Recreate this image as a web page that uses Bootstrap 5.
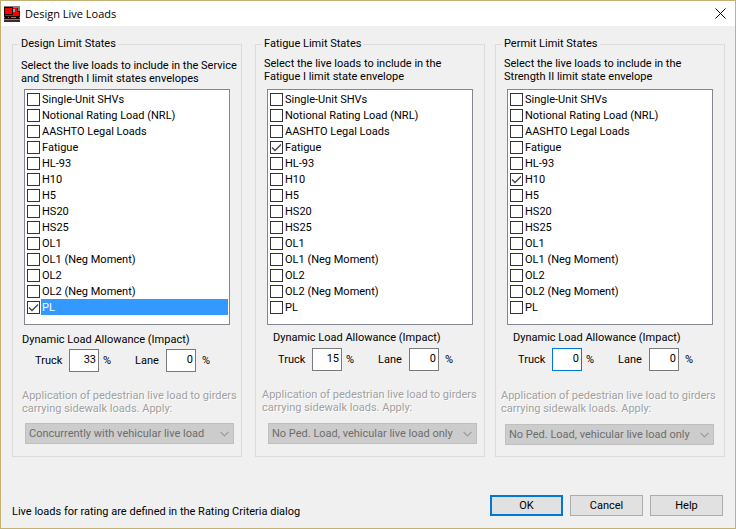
<!DOCTYPE html>
<html lang="en">
<head>
<meta charset="utf-8">
<meta name="viewport" content="width=device-width, initial-scale=1">
<title>Design Live Loads</title>
<link href="https://cdn.jsdelivr.net/npm/bootstrap@5.3.0/dist/css/bootstrap.min.css" rel="stylesheet">
<style>
body { font-family: Roboto, "Liberation Sans", sans-serif; font-size: 11px; line-height: 13px; color: #000; background: #f0f0f0; }
.dialog { border: 1px solid #c4b070; }
.titlebar { height: 25px; padding: 0 9px 0 3px; background: #fff; }
.titlebar h1 { font: 11px/16px "Open Sans", "Noto Sans", sans-serif; margin: 0 0 0 5px; }
.close-btn { width: 11px; height: 11px; line-height: 0; }
.content { padding: 11px 10px 0 11px; }
.group { flex: 1 1 0; border: 1px solid #dcdcdc; padding: 0 11px 11px; --apply-x: -2px; --combo-x: 1px; --impact-x: -2px; }
.group-fatigue { margin-left: 13px; --apply-x: -5px; --impact-x: 6px; }
.group-permit { margin-left: 10px; --apply-x: -6px; --combo-x: -2px; --impact-x: 6px; }
.group legend { float: none; width: auto; margin: 0 0 0 -5px; padding: 0 2px; font-size: 11px; line-height: 14px; }
.intro { margin: 8px -8px 4px -3px; white-space: nowrap; }
.group-fatigue .intro, .group-permit .intro { margin-top: 6px; margin-bottom: 6px; }
.checklist { border: 1px solid #828790; background: #fff; padding: 1px 1px 9px 2px; }
.checklist li { height: 16px; }
.checklist label { line-height: 16px; padding: 1px 0 0 1px; margin-left: 1px; }
.checklist .selected label { background: #39f; color: #fff; }
.tick { appearance: none; width: 13px; height: 13px; margin: 2px 0 0; border: 1px solid #333; border-radius: 0; background: #fff; flex: none; }
.tick:checked { background: #fff url("data:image/svg+xml,%3Csvg xmlns='http://www.w3.org/2000/svg' viewBox='0 0 11 11'%3E%3Cpath d='M1 5.5 4 8.5 10 2.5' fill='none' stroke='%23444' stroke-width='1.3'/%3E%3C/svg%3E") center / 11px 11px no-repeat; }
.impact { margin: 8px 0 0 var(--impact-x); }
.group-fatigue .impact, .group-permit .impact { margin-top: 6px; }
.factors { margin: 3px 0 0 11px; height: 23px; }
.group-fatigue .factors, .group-permit .factors { margin-top: 4px; }
.factors label { width: 34px; }
.factors .lane { margin-left: 21px; width: 31px; }
.factors input { width: 30px; height: 23px; border: 1px solid #7a7a7a; border-radius: 0; padding: 0 2px 3px 0; text-align: right; background: #fff; color: #000; }
.factors input.active { border-color: #0078d7; }
.unit { margin-left: 4px; width: 11px; }
.lane-unit { margin-left: 6px; }
.apply { display: block; margin: 17px -10px 8px var(--apply-x); white-space: nowrap; color: #a0a0a0; text-shadow: 1px 1px 0 #fff; }
.group-fatigue .apply, .group-permit .apply { margin-bottom: 9px; }
.group-permit .apply { margin-top: 18px; }
.combo { display: block; height: 21px; margin-left: var(--combo-x); width: calc(100% + 3px); border: 1px solid #bfbfbf; border-radius: 0; padding: 0 18px 0 3px; font-size: 11px; line-height: 19px; }
.combo:disabled { color: #6d6d6d; opacity: 1; background: #ccc url("data:image/svg+xml,%3Csvg xmlns='http://www.w3.org/2000/svg' viewBox='0 0 9 6'%3E%3Cpath d='M.5 .8 4.5 4.8 8.5 .8' fill='none' stroke='%239c9c9c' stroke-width='1.2'/%3E%3C/svg%3E") right 4px center / 9px 6px no-repeat; }
.footer { padding: 38px 12px 6px 11px; }
.footer p { margin-top: 10px; }
.commands { gap: 7px; }
.cmd { width: 73px; height: 21px; padding: 0; border: 1px solid #adadad; border-radius: 0; background: #e1e1e1; color: #000; font-size: 11px; line-height: 17px; }
.cmd-default { border: 2px solid #0078d7; }
</style>
</head>
<body>
<main class="dialog min-vh-100 d-flex flex-column">
  <header class="titlebar d-flex align-items-center">
    <svg width="16" height="16" viewBox="0 0 16 16" shape-rendering="crispEdges" aria-hidden="true">
      <path fill="#808080" d="M0 0h16v16H0z"/>
      <path fill="#200" d="M0 1h9v1h5v3h2v6H0z"/>
      <path fill="#f00" d="M1 2h7v6H1zM9 2h4v4h2v3H9zM1 9h14v1H1z"/>
      <path fill="#3cc" d="M9 3h2v3H9z"/>
      <path fill="#000" d="M1 10h3v2H1zM5 10h2v2H5zM12 10h3v2h-3z"/>
      <path fill="#300" d="M0 12h16v1H0z"/>
      <path fill="#333" d="M0 14h16v2H0z"/>
    </svg>
    <h1>Design Live Loads</h1>
    <button type="button" class="close-btn btn p-0 border-0 ms-auto" aria-label="Close">
      <svg width="11" height="11" viewBox="0 0 11 11"><path d="M.5 .5 10.500 10.500M10.500 .5 .5 10.500" stroke="#000" stroke-width="1"/></svg>
    </button>
  </header>

  <div class="content d-flex align-items-stretch">
    <fieldset class="group">
      <legend>Design Limit States</legend>
      <p class="intro">Select the live loads to include in the Service<br>and Strength I limit states envelopes</p>
      <ul class="checklist list-unstyled mb-0">
        <li class="d-flex"><input class="tick" type="checkbox" id="d1"><label class="flex-fill" for="d1">Single-Unit SHVs</label></li>
        <li class="d-flex"><input class="tick" type="checkbox" id="d2"><label class="flex-fill" for="d2">Notional Rating Load (NRL)</label></li>
        <li class="d-flex"><input class="tick" type="checkbox" id="d3"><label class="flex-fill" for="d3">AASHTO Legal Loads</label></li>
        <li class="d-flex"><input class="tick" type="checkbox" id="d4"><label class="flex-fill" for="d4">Fatigue</label></li>
        <li class="d-flex"><input class="tick" type="checkbox" id="d5"><label class="flex-fill" for="d5">HL-93</label></li>
        <li class="d-flex"><input class="tick" type="checkbox" id="d6"><label class="flex-fill" for="d6">H10</label></li>
        <li class="d-flex"><input class="tick" type="checkbox" id="d7"><label class="flex-fill" for="d7">H5</label></li>
        <li class="d-flex"><input class="tick" type="checkbox" id="d8"><label class="flex-fill" for="d8">HS20</label></li>
        <li class="d-flex"><input class="tick" type="checkbox" id="d9"><label class="flex-fill" for="d9">HS25</label></li>
        <li class="d-flex"><input class="tick" type="checkbox" id="d10"><label class="flex-fill" for="d10">OL1</label></li>
        <li class="d-flex"><input class="tick" type="checkbox" id="d11"><label class="flex-fill" for="d11">OL1 (Neg Moment)</label></li>
        <li class="d-flex"><input class="tick" type="checkbox" id="d12"><label class="flex-fill" for="d12">OL2</label></li>
        <li class="d-flex"><input class="tick" type="checkbox" id="d13"><label class="flex-fill" for="d13">OL2 (Neg Moment)</label></li>
        <li class="d-flex selected"><input class="tick" type="checkbox" id="d14" checked><label class="flex-fill" for="d14">PL</label></li>
      </ul>
      <p class="impact">Dynamic Load Allowance (Impact)</p>
      <div class="factors d-flex align-items-center">
        <label for="dt">Truck</label><input id="dt" type="text" value="33"><span class="unit">%</span>
        <label class="lane" for="dl">Lane</label><input id="dl" type="text" value="0"><span class="unit lane-unit">%</span>
      </div>
      <label class="apply" for="dc">Application of pedestrian live load to girders<br>carrying sidewalk loads. Apply:</label>
      <select class="combo form-select" id="dc" disabled><option>Concurrently with vehicular live load</option></select>
    </fieldset>

    <fieldset class="group group-fatigue">
      <legend>Fatigue Limit States</legend>
      <p class="intro">Select the live loads to include in the<br>Fatigue I limit state envelope</p>
      <ul class="checklist list-unstyled mb-0">
        <li class="d-flex"><input class="tick" type="checkbox" id="f1"><label class="flex-fill" for="f1">Single-Unit SHVs</label></li>
        <li class="d-flex"><input class="tick" type="checkbox" id="f2"><label class="flex-fill" for="f2">Notional Rating Load (NRL)</label></li>
        <li class="d-flex"><input class="tick" type="checkbox" id="f3"><label class="flex-fill" for="f3">AASHTO Legal Loads</label></li>
        <li class="d-flex"><input class="tick" type="checkbox" id="f4" checked><label class="flex-fill" for="f4">Fatigue</label></li>
        <li class="d-flex"><input class="tick" type="checkbox" id="f5"><label class="flex-fill" for="f5">HL-93</label></li>
        <li class="d-flex"><input class="tick" type="checkbox" id="f6"><label class="flex-fill" for="f6">H10</label></li>
        <li class="d-flex"><input class="tick" type="checkbox" id="f7"><label class="flex-fill" for="f7">H5</label></li>
        <li class="d-flex"><input class="tick" type="checkbox" id="f8"><label class="flex-fill" for="f8">HS20</label></li>
        <li class="d-flex"><input class="tick" type="checkbox" id="f9"><label class="flex-fill" for="f9">HS25</label></li>
        <li class="d-flex"><input class="tick" type="checkbox" id="f10"><label class="flex-fill" for="f10">OL1</label></li>
        <li class="d-flex"><input class="tick" type="checkbox" id="f11"><label class="flex-fill" for="f11">OL1 (Neg Moment)</label></li>
        <li class="d-flex"><input class="tick" type="checkbox" id="f12"><label class="flex-fill" for="f12">OL2</label></li>
        <li class="d-flex"><input class="tick" type="checkbox" id="f13"><label class="flex-fill" for="f13">OL2 (Neg Moment)</label></li>
        <li class="d-flex"><input class="tick" type="checkbox" id="f14"><label class="flex-fill" for="f14">PL</label></li>
      </ul>
      <p class="impact">Dynamic Load Allowance (Impact)</p>
      <div class="factors d-flex align-items-center">
        <label for="ft">Truck</label><input id="ft" type="text" value="15"><span class="unit">%</span>
        <label class="lane" for="fl">Lane</label><input id="fl" type="text" value="0"><span class="unit lane-unit">%</span>
      </div>
      <label class="apply" for="fc">Application of pedestrian live load to girders<br>carrying sidewalk loads. Apply:</label>
      <select class="combo form-select" id="fc" disabled><option>No Ped. Load, vehicular live load only</option></select>
    </fieldset>

    <fieldset class="group group-permit">
      <legend>Permit Limit States</legend>
      <p class="intro">Select the live loads to include in the<br>Strength II limit state envelope</p>
      <ul class="checklist list-unstyled mb-0">
        <li class="d-flex"><input class="tick" type="checkbox" id="p1"><label class="flex-fill" for="p1">Single-Unit SHVs</label></li>
        <li class="d-flex"><input class="tick" type="checkbox" id="p2"><label class="flex-fill" for="p2">Notional Rating Load (NRL)</label></li>
        <li class="d-flex"><input class="tick" type="checkbox" id="p3"><label class="flex-fill" for="p3">AASHTO Legal Loads</label></li>
        <li class="d-flex"><input class="tick" type="checkbox" id="p4"><label class="flex-fill" for="p4">Fatigue</label></li>
        <li class="d-flex"><input class="tick" type="checkbox" id="p5"><label class="flex-fill" for="p5">HL-93</label></li>
        <li class="d-flex"><input class="tick" type="checkbox" id="p6" checked><label class="flex-fill" for="p6">H10</label></li>
        <li class="d-flex"><input class="tick" type="checkbox" id="p7"><label class="flex-fill" for="p7">H5</label></li>
        <li class="d-flex"><input class="tick" type="checkbox" id="p8"><label class="flex-fill" for="p8">HS20</label></li>
        <li class="d-flex"><input class="tick" type="checkbox" id="p9"><label class="flex-fill" for="p9">HS25</label></li>
        <li class="d-flex"><input class="tick" type="checkbox" id="p10"><label class="flex-fill" for="p10">OL1</label></li>
        <li class="d-flex"><input class="tick" type="checkbox" id="p11"><label class="flex-fill" for="p11">OL1 (Neg Moment)</label></li>
        <li class="d-flex"><input class="tick" type="checkbox" id="p12"><label class="flex-fill" for="p12">OL2</label></li>
        <li class="d-flex"><input class="tick" type="checkbox" id="p13"><label class="flex-fill" for="p13">OL2 (Neg Moment)</label></li>
        <li class="d-flex"><input class="tick" type="checkbox" id="p14"><label class="flex-fill" for="p14">PL</label></li>
      </ul>
      <p class="impact">Dynamic Load Allowance (Impact)</p>
      <div class="factors d-flex align-items-center">
        <label for="pt">Truck</label><input class="active" id="pt" type="text" value="0"><span class="unit">%</span>
        <label class="lane" for="pl">Lane</label><input id="pl" type="text" value="0"><span class="unit lane-unit">%</span>
      </div>
      <label class="apply" for="pc">Application of pedestrian live load to girders<br>carrying sidewalk loads. Apply:</label>
      <select class="combo form-select" id="pc" disabled><option>No Ped. Load, vehicular live load only</option></select>
    </fieldset>
  </div>

  <footer class="footer d-flex align-items-start">
    <p class="mb-0 me-auto">Live loads for rating are defined in the Rating Criteria dialog</p>
    <div class="commands d-flex">
      <button type="button" class="cmd cmd-default btn">OK</button>
      <button type="button" class="cmd btn">Cancel</button>
      <button type="button" class="cmd btn">Help</button>
    </div>
  </footer>
</main>
<script src="https://cdn.jsdelivr.net/npm/bootstrap@5.3.0/dist/js/bootstrap.bundle.min.js"></script>
</body>
</html>
